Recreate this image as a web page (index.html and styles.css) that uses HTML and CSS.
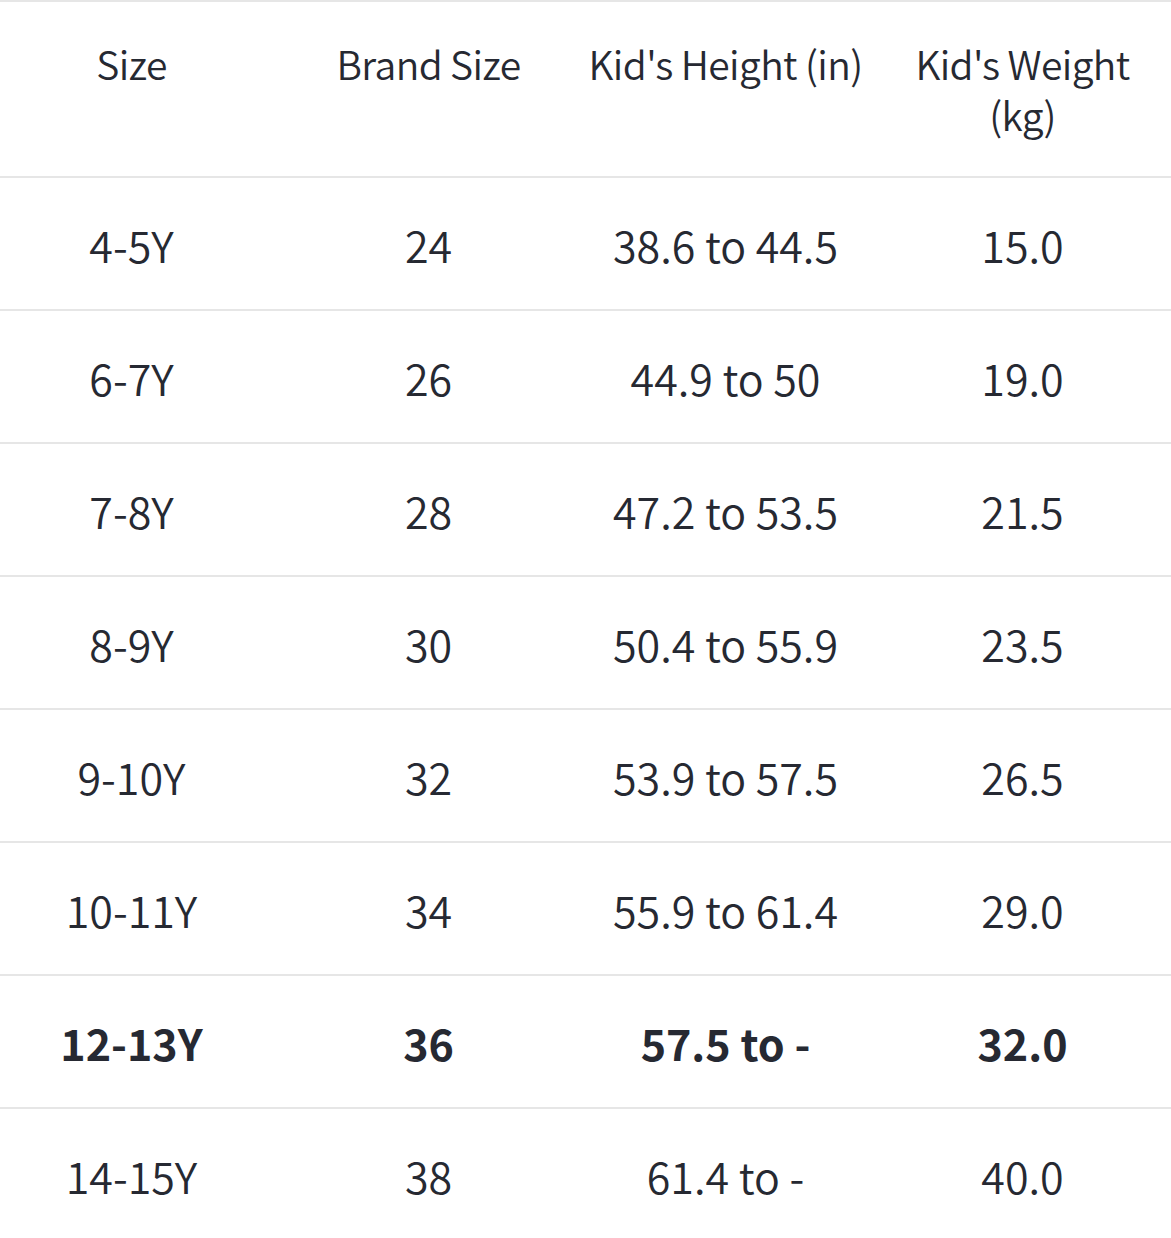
FILE: index.html
```html
<!DOCTYPE html>
<html>
<head>
<meta charset="utf-8">
<link rel="stylesheet" href="styles.css">
</head>
<body>
<div class="sheet">
  <div class="row head">
    <div class="cell">Size</div>
    <div class="cell">Brand Size</div>
    <div class="cell">Kid's Height (in)</div>
    <div class="cell">Kid's Weight (kg)</div>
  </div>
  <div class="row"><div class="cell">4-5Y</div><div class="cell">24</div><div class="cell">38.6 to 44.5</div><div class="cell">15.0</div></div>
  <div class="row"><div class="cell">6-7Y</div><div class="cell">26</div><div class="cell">44.9 to 50</div><div class="cell">19.0</div></div>
  <div class="row"><div class="cell">7-8Y</div><div class="cell">28</div><div class="cell">47.2 to 53.5</div><div class="cell">21.5</div></div>
  <div class="row"><div class="cell">8-9Y</div><div class="cell">30</div><div class="cell">50.4 to 55.9</div><div class="cell">23.5</div></div>
  <div class="row"><div class="cell">9-10Y</div><div class="cell">32</div><div class="cell">53.9 to 57.5</div><div class="cell">26.5</div></div>
  <div class="row"><div class="cell">10-11Y</div><div class="cell">34</div><div class="cell">55.9 to 61.4</div><div class="cell">29.0</div></div>
  <div class="row current"><div class="cell">12-13Y</div><div class="cell">36</div><div class="cell">57.5 to -</div><div class="cell">32.0</div></div>
  <div class="row"><div class="cell">14-15Y</div><div class="cell">38</div><div class="cell">61.4 to -</div><div class="cell">40.0</div></div>
</div>
</body>
</html>
```
FILE: styles.css
```css
html, body {
  margin: 0;
  padding: 0;
  background: #ffffff;
  overflow: hidden;
}
.sheet {
  margin-left: -17px;
  width: 1188px;
  padding-top: 2px;
  font-family: "Noto Sans CJK SC", "Noto Sans", sans-serif;
  font-size: 43px;
  font-weight: 350;
  color: #262932;
  border-top: 2px solid #e6e6e6;
}
.row {
  display: grid;
  grid-template-columns: repeat(4, 297px);
  height: 131px;
  align-items: center;
  border-bottom: 2px solid #e6e6e6;
}
.row.head {
  height: 174px;
  font-size: 39px;
  letter-spacing: -0.6px;
  line-height: 51px;
  align-items: start;
  box-sizing: border-box;
  padding-top: 34px;
}
.cell {
  text-align: center;
  padding: 0 8px;
}
.row.current {
  font-weight: 700;
}
```
